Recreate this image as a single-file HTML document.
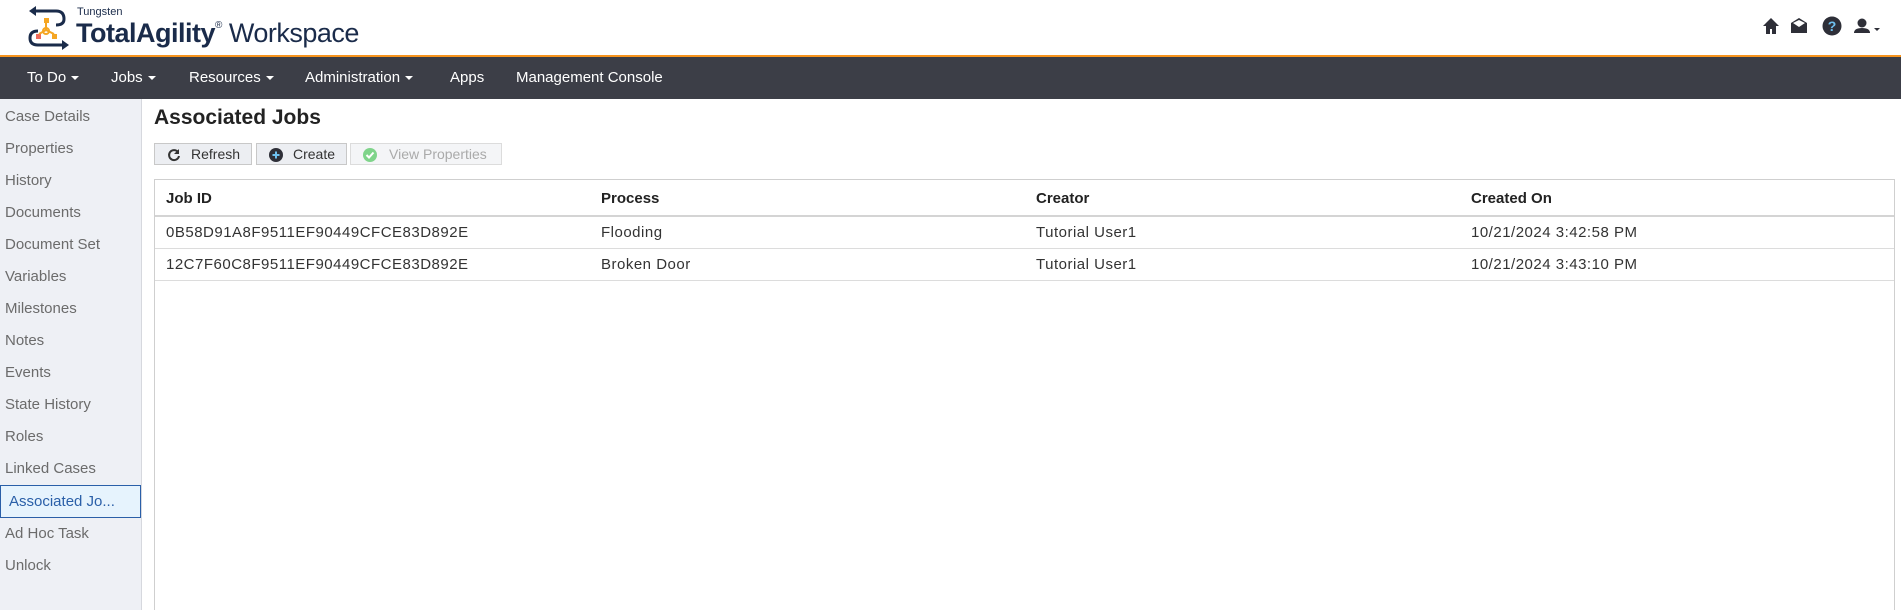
<!DOCTYPE html>
<html><head><meta charset="utf-8"><style>
*{box-sizing:border-box;margin:0;padding:0}
html,body{width:1901px;height:610px;overflow:hidden}
body{background:#fff;font-family:"Liberation Sans",sans-serif;color:#333;position:relative}
.abs{position:absolute}
#hdr{height:57px;border-bottom:2px solid #f7941d}
#nav{top:57px;left:0;width:1901px;height:42px;background:#3c3e47;color:#fff;font-size:15px}
#nav span{position:absolute;top:12px}
.car{display:inline-block;border-left:4px solid transparent;border-right:4px solid transparent;border-top:4px solid #fff;vertical-align:middle;margin-left:5px}
#side{top:99px;left:0;width:142px;height:511px;background:#eef0f5;border-right:1px solid #d6d8de}
#side div{position:absolute;left:5px;font-size:15px;color:#6b6b6b}
#sel{position:absolute;left:0!important;width:141px;height:33px;background:#e6f3fd;border:1px solid #2a5fa8;color:#2a5fa8!important;padding:7px 0 0 8px}
h1{position:absolute;left:154px;top:106px;font-size:21px;font-weight:bold;color:#222}
.btn{position:absolute;top:143px;height:22px;border:1px solid #c8c8c8;background:#eceef2;font-size:14px;color:#333}
.btn svg{position:absolute;left:12px;top:4px}
.btn b{font-weight:normal;position:absolute;top:2px}
#tbl{top:179px;left:154px;width:1741px;height:431px;border:1px solid #cfcfcf;border-bottom:none}
.row{position:absolute;left:0;width:100%;border-bottom:1px solid #dcdcdc;font-size:15px}
.row span{position:absolute;top:10px}
.h span{font-weight:bold;color:#222}
.d span{letter-spacing:.5px;color:#333}
</style></head><body>
<div id="hdr" class="abs" style="left:0;top:0;width:1901px"></div>
<svg class="abs" style="left:26px;top:4px" width="46" height="46" viewBox="0 0 46 46">
<path d="M8 7 H30 Q38 7 38 15 Q38 21 30 21" fill="none" stroke="#1a2b4a" stroke-width="3"/>
<path d="M3 7 L10 2 L10 12 Z" fill="#1a2b4a"/>
<path d="M12 27 Q4 27 4 34 Q4 41 12 41 H38" fill="none" stroke="#1a2b4a" stroke-width="3"/>
<path d="M43 41 L36 36 L36 46 Z" fill="#1a2b4a"/>
<rect x="18" y="14" width="5" height="5" fill="#f5a623"/><rect x="10" y="30" width="5" height="5" fill="#ef6b5c"/><rect x="26" y="30" width="5" height="5" fill="#f5a623"/>
<path d="M20 19 V26 M20 26 L13 30 M20 26 L28 30" stroke="#f5a623" stroke-width="2" fill="none"/><circle cx="20" cy="27" r="3" fill="none" stroke="#f5a623" stroke-width="2"/>
</svg>
<div class="abs" style="left:77px;top:6px;font-size:11px;color:#1a2b4a">Tungsten</div>
<div class="abs" style="left:76px;top:18px;font-size:27px;color:#1a2b4a;font-weight:bold;letter-spacing:-.5px">TotalAgility<sup style="font-size:10px;font-weight:normal;vertical-align:14px">®</sup> <span style="font-weight:normal">Workspace</span></div>
<svg class="abs" style="left:1761px;top:16px" width="120" height="20" viewBox="0 0 120 20">
<path d="M2 10 L10 2 L18 10 H15 V18 H11 V13 H9 V18 H5 V10 Z" fill="#2e2f38"/>
<path d="M30 7 L38 2 L46 7 V17 H30 Z" fill="#2e2f38"/><path d="M32 7 L38 11 L44 7 L38 4 Z" fill="#fff"/>
<circle cx="71" cy="10" r="9.5" fill="#2e2f38"/><text x="71" y="15" font-size="14" font-weight="bold" fill="#6fc1f0" text-anchor="middle" font-family="Liberation Sans">?</text>
<circle cx="101" cy="7" r="4.5" fill="#2e2f38"/><path d="M93 17 Q93 12 101 12 Q109 12 109 17 Z" fill="#2e2f38"/><path d="M113 12 L119 12 L116 15 Z" fill="#2e2f38"/>
</svg>
<div id="nav" class="abs">
<span style="left:27px">To Do<i class="car"></i></span>
<span style="left:111px">Jobs<i class="car"></i></span>
<span style="left:189px">Resources<i class="car"></i></span>
<span style="left:305px">Administration<i class="car"></i></span>
<span style="left:450px">Apps</span>
<span style="left:516px">Management Console</span>
</div>
<div id="side" class="abs">
<div style="top:9px">Case Details</div><div style="top:41px">Properties</div><div style="top:73px">History</div><div style="top:105px">Documents</div><div style="top:137px">Document Set</div><div style="top:169px">Variables</div><div style="top:201px">Milestones</div><div style="top:233px">Notes</div><div style="top:265px">Events</div><div style="top:297px">State History</div><div style="top:329px">Roles</div><div style="top:361px">Linked Cases</div>
<div id="sel" style="top:386px">Associated Jo...</div>
<div style="top:426px">Ad Hoc Task</div><div style="top:458px">Unlock</div>
</div>
<h1>Associated Jobs</h1>
<div class="btn" style="left:154px;width:98px"><svg width="14" height="14" viewBox="0 0 14 14"><path d="M11 4 A5 5 0 1 0 12 8" fill="none" stroke="#333" stroke-width="2"/><path d="M12 1 V6 H7 Z" fill="#333"/></svg><b style="left:36px">Refresh</b></div>
<div class="btn" style="left:256px;width:91px"><svg width="14" height="14"><circle cx="7" cy="7" r="7" fill="#2e2f38"/><path d="M7 3.5V10.5M3.5 7H10.5" stroke="#6fc1f0" stroke-width="2"/></svg><b style="left:36px">Create</b></div>
<div class="btn" style="left:350px;width:152px;background:#f4f5f7;border-color:#dcdcdc;color:#aaa"><svg width="14" height="14"><circle cx="7" cy="7" r="7" fill="#7fd48a"/><path d="M3.5 7 L6 9.5 L10.5 4.5" stroke="#fff" stroke-width="2" fill="none"/></svg><b style="left:38px">View Properties</b></div>
<div id="tbl" class="abs">
<div class="row h" style="top:0;height:37px;border-bottom:2px solid #d4d4d4"><span style="left:11px">Job ID</span><span style="left:446px">Process</span><span style="left:881px">Creator</span><span style="left:1316px">Created On</span></div>
<div class="row d" style="top:37px;height:32px"><span style="left:11px;top:7px">0B58D91A8F9511EF90449CFCE83D892E</span><span style="left:446px;top:7px">Flooding</span><span style="left:881px;top:7px">Tutorial User1</span><span style="left:1316px;top:7px">10/21/2024 3:42:58 PM</span></div>
<div class="row d" style="top:69px;height:32px"><span style="left:11px;top:7px">12C7F60C8F9511EF90449CFCE83D892E</span><span style="left:446px;top:7px">Broken Door</span><span style="left:881px;top:7px">Tutorial User1</span><span style="left:1316px;top:7px">10/21/2024 3:43:10 PM</span></div>
</div>
</body></html>
